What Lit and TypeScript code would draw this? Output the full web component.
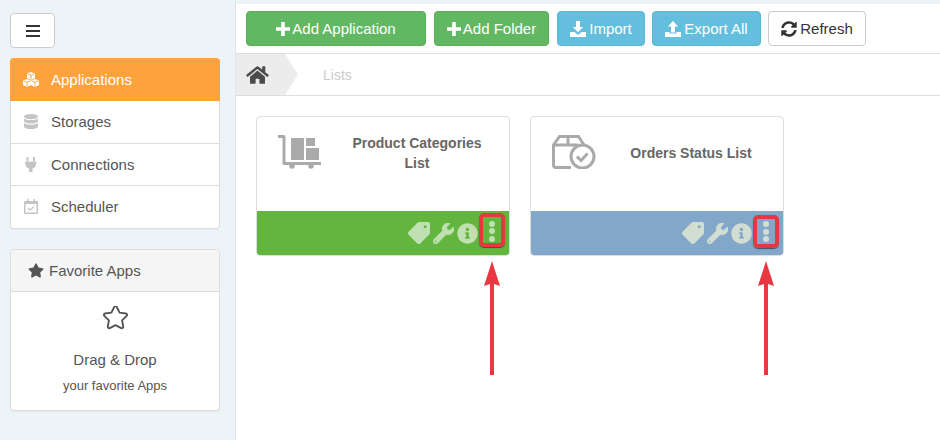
// Lists page - sidebar, toolbar, breadcrumb and list cards
import { LitElement, html, svg, css } from 'lit'
import { customElement } from 'lit/decorators.js'

const HOME = 'M280.37 148.26L96 300.11V464a16 16 0 0 0 16 16l112.06-.29a16 16 0 0 0 15.92-16V368a16 16 0 0 1 16-16h64a16 16 0 0 1 16 16v95.64a16 16 0 0 0 16 16.05L464 480a16 16 0 0 0 16-16V300L295.67 148.26a12.19 12.19 0 0 0-15.3 0zM571.6 251.47L488 182.56V44.05a12 12 0 0 0-12-12h-56a12 12 0 0 0-12 12v72.61L318.47 43a48 48 0 0 0-61 0L4.34 251.47a12 12 0 0 0-1.6 16.9l25.5 31A12 12 0 0 0 45.15 301l235.22-193.74a12.19 12.19 0 0 1 15.3 0L530.9 301a12 12 0 0 0 16.9-1.6l25.5-31a12 12 0 0 0-1.7-16.93z'
const STAR = 'M259.3 17.8L194 150.2 47.9 171.5c-26.2 3.8-36.7 36.1-17.7 54.6l105.7 103-25 145.5c-4.5 26.3 23.2 46 46.4 33.7L288 439.6l130.7 68.7c23.2 12.2 50.9-7.4 46.4-33.7l-25-145.5 105.7-103c19-18.5 8.5-50.8-17.7-54.6L382 150.2 316.7 17.8c-11.7-23.6-45.6-23.9-57.4 0z'
const SYNC = 'M370.72 133.28C339.458 104.008 298.888 87.962 255.848 88c-77.458.068-144.328 53.178-162.791 126.85-1.344 5.363-6.122 9.15-11.651 9.15H24.103c-7.498 0-13.194-6.807-11.807-14.176C33.933 94.924 134.813 8 256 8c66.448 0 126.791 26.136 171.315 68.685L463.03 40.97C478.149 25.851 504 36.559 504 57.941V192c0 13.255-10.745 24-24 24H345.941c-21.382 0-32.09-25.851-16.971-40.971l41.75-41.749zM32 296h134.059c21.382 0 32.09 25.851 16.971 40.971l-41.75 41.75c31.262 29.273 71.835 45.319 114.876 45.28 77.418-.07 144.315-53.144 162.787-126.849 1.344-5.363 6.122-9.15 11.651-9.15h57.304c7.498 0 13.194 6.807 11.807 14.176C478.067 417.076 377.187 504 256 504c-66.448 0-126.791-26.136-171.315-68.685L48.97 471.03C33.851 486.149 8 475.441 8 454.059V320c0-13.255 10.745-24 24-24z'
const TAG = 'M0 252.118V48C0 21.49 21.49 0 48 0h204.118a48 48 0 0 1 33.941 14.059l211.882 211.882c18.745 18.745 18.745 49.137 0 67.882L293.823 497.941c-18.745 18.745-49.137 18.745-67.882 0L14.059 286.059A48 48 0 0 1 0 252.118zM112 76a36 36 0 1 0 0 72a36 36 0 1 0 0-72z'
const WRENCH = 'M507.73 109.1c-2.24-9.03-13.54-12.09-20.12-5.51l-74.36 74.36-67.88-11.31-11.31-67.88 74.36-74.36c6.62-6.62 3.43-17.9-5.66-20.16-47.38-11.74-99.55.91-136.58 37.93-39.64 39.64-50.55 97.1-34.05 147.2L18.74 402.76c-24.99 24.99-24.99 65.51 0 90.5 24.99 24.99 65.51 24.99 90.5 0l213.21-213.21c50.12 16.71 107.47 5.68 147.37-34.22 37.07-37.07 49.7-89.32 37.91-136.73zM64 472c-13.25 0-24-10.75-24-24 0-13.26 10.75-24 24-24s24 10.74 24 24c0 13.25-10.75 24-24 24z'
const INFO = 'M256 8C119.043 8 8 119.083 8 256c0 136.997 111.043 248 248 248s248-111.003 248-248C504 119.083 392.957 8 256 8zm0 110c23.196 0 42 18.804 42 42s-18.804 42-42 42-42-18.804-42-42 18.804-42 42-42zm56 254c0 6.627-5.373 12-12 12h-88c-6.627 0-12-5.373-12-12v-24c0-6.627 5.373-12 12-12h12v-64h-12c-6.627 0-12-5.373-12-12v-24c0-6.627 5.373-12 12-12h64c6.627 0 12 5.373 12 12v100h12c6.627 0 12 5.373 12 12v24z'

const icon = (d: string, w: number, h: number, vb = '0 0 512 512') => html`
  <svg width=${w} height=${h} viewBox=${vb} fill="currentColor"><path d=${d}></path></svg>
`

const plus = html`<svg width="14" height="14" viewBox="0 0 14 14" fill="currentColor"><path d="M5.2 0h3.6v5.2H14v3.6H8.8V14H5.2V8.8H0V5.2h5.2z"></path></svg>`
const download = html`<svg width="16" height="16" viewBox="0 0 16 16" fill="currentColor"><path d="M6 0h4v6h3.2L8 11.2 2.8 6H6z"></path><path d="M0 11h4.4L8 14l3.6-3H16v5H0z"></path></svg>`
const upload = html`<svg width="16" height="16" viewBox="0 0 16 16" fill="currentColor"><path d="M8 0l5.2 5.4H10v6H6v-6H2.800z"></path><path d="M0 11h4.600v1.600h6.800V11H16v5H0z"></path></svg>`

// three stacked cubes, each with its seams cut out in the row colour
const cube = (x: number, y: number) => svg`
  <path transform="translate(${x} ${y})" d="M4 0l4 1.500v4.500L4 8 0 6V1.500z"></path>
  <path transform="translate(${x} ${y})" d="M.6 1.800L4 3.300l3.400-1.500M4 3.300V7.600" fill="none" stroke="#fea33c" stroke-width=".9"></path>
`
const cubes = html`<svg width="16" height="15" viewBox="0 0 16 15" fill="currentColor">
  ${cube(4, 0)}${cube(0, 7)}${cube(8, 7)}
</svg>`
const database = html`<svg width="14" height="15" viewBox="0 0 14 15" fill="currentColor">
  <ellipse cx="7" cy="2.600" rx="7" ry="2.600"></ellipse>
  <path d="M0 4.400c1.400 1.200 4 1.700 7 1.700s5.600-.5 7-1.700v2.600c0 1.400-3.100 2.500-7 2.500S0 8.400 0 7z"></path>
  <path d="M0 9c1.400 1.200 4 1.700 7 1.700s5.600-.5 7-1.700v3.400C14 13.900 10.900 15 7 15s-7-1.100-7-2.600z"></path>
</svg>`
const plug = html`<svg width="12" height="15" viewBox="0 0 12 15" fill="currentColor">
  <path d="M1.500 0h2v4h-2zM8 0h2v4H8z"></path>
  <path d="M0 4.500h11.500v2h-.7v1.200c0 2-1.400 3.500-3.300 3.800V15H4v-3.500C2.100 11.200.7 9.700.7 7.700V6.500H0z"></path>
</svg>`
const calendar = html`<svg width="14" height="15" viewBox="0 0 14 15">
  <path d="M1 2h12a1 1 0 0 1 1 1v11a1 1 0 0 1-1 1H1a1 1 0 0 1-1-1V3a1 1 0 0 1 1-1z" fill="currentColor"></path>
  <path d="M3 0h1.500v3H3zM9.500 0H11v3H9.500z" fill="currentColor"></path>
  <rect x="1.500" y="5" width="11" height="8.500" fill="#fff"></rect>
  <path d="M4 9l2.200 2.200L10 7.400" fill="none" stroke="currentColor" stroke-width="1.300"></path>
</svg>`

const trolley = html`<svg width="44" height="36" viewBox="0 0 44 36">
  <path d="M0 3.500h6v27h37" fill="none" stroke="currentColor" stroke-width="3" stroke-linejoin="round"></path>
  <rect x="13" y="5" width="13" height="22" fill="currentColor"></rect>
  <rect x="28" y="5" width="9" height="8" fill="currentColor"></rect>
  <rect x="28" y="15" width="13" height="12" fill="currentColor"></rect>
  <circle cx="14" cy="33" r="2.800" fill="currentColor"></circle>
  <circle cx="33" cy="33" r="2.800" fill="currentColor"></circle>
</svg>`
const parcel = html`<svg width="44" height="36" viewBox="0 0 44 36" fill="none" stroke="currentColor" stroke-width="3">
  <path d="M19 34.500H4a2.500 2.500 0 0 1-2.500-2.500V12L7.500 3.500h19L32 12"></path>
  <path d="M1.500 12H26M16 3.500V12"></path>
  <circle cx="30.500" cy="23.500" r="11.500"></circle>
  <path d="M25 23.500l4 4 6.500-7"></path>
</svg>`

const arrow = svg`
  <path d="M8 0l8 25-6-2v91H6V23l-6 2z" fill="#ea3741"></path>
`

@customElement('app-root')
export class AppRoot extends LitElement {
  static styles = css`
    :host {
      display: flex;
      width: 940px;
      height: 440px;
      overflow: hidden;
      position: relative;
      background: #edf4f7;
      font-family: 'Liberation Sans', Arial, sans-serif;
      color: #555;
    }

    .side {
      width: 236px;
      flex: none;
      box-sizing: border-box;
      padding: 13px 15px 0 10px;
      border-right: 1px solid #e0e4e6;
    }

    .toggle {
      display: flex;
      align-items: center;
      justify-content: center;
      width: 45px;
      height: 35px;
      box-sizing: border-box;
      background: #fff;
      border: 1px solid #ccc;
      border-radius: 4px;
      margin-bottom: 10px;
    }
    .toggle svg { display: block; }

    .menu {
      background: #fff;
      border: 1px solid #ddd;
      border-radius: 4px;
      box-shadow: 0 1px 1px rgba(0, 0, 0, 0.05);
      margin-bottom: 20px;
    }
    .menu-item {
      display: flex;
      align-items: center;
      height: 42px;
      box-sizing: border-box;
      padding-left: 12px;
      border-top: 1px solid #ddd;
      font-size: 15px;
      color: #555;
    }
    .menu-item:first-child { border-top: 0; }
    .menu-item.active {
      margin: -1px -1px 0;
      height: 43px;
      padding-left: 13px;
      background: #fea33c;
      color: #fff;
      border-radius: 4px 4px 0 0;
    }
    .menu-item.active + .menu-item { border-top: 0; padding-bottom: 1px; }
    .menu-icon {
      width: 16px;
      margin-right: 12px;
      display: flex;
      justify-content: center;
      color: #c4c4c4;
    }
    .active .menu-icon { color: #fff; }
    .menu-item:last-child { height: 43px; padding-bottom: 2px; }

    .fav {
      background: #fff;
      border: 1px solid #ddd;
      border-radius: 4px;
      box-shadow: 0 1px 1px rgba(0, 0, 0, 0.05);
      height: 162px;
      box-sizing: border-box;
    }
    .fav-head {
      display: flex;
      align-items: center;
      gap: 5px;
      height: 42px;
      box-sizing: border-box;
      padding-left: 17px;
      background: #f5f5f5;
      border-bottom: 1px solid #ddd;
      border-radius: 4px 4px 0 0;
      font-size: 15px;
      color: #555;
    }
    .fav-body {
      display: flex;
      flex-direction: column;
      align-items: center;
      padding-top: 14px;
    }
    .fav-title { font-size: 15px; line-height: 20px; margin-top: 20px; }
    .fav-sub { font-size: 13px; line-height: 16px; margin-top: 8px; color: #555; }

    .main {
      flex: 1;
      margin-top: 4px;
      background: #fff;
      min-width: 0;
    }

    .toolbar {
      display: flex;
      gap: 8px;
      height: 50px;
      box-sizing: border-box;
      padding: 7px 10px 0;
      border-bottom: 1px solid #ddd;
    }
    .btn {
      display: flex;
      align-items: center;
      justify-content: center;
      gap: 3px;
      height: 35px;
      box-sizing: border-box;
      border: 1px solid transparent;
      border-radius: 4px;
      font-size: 15px;
      color: #fff;
    }
    .btn svg { display: block; }
    .green { background: #62b762; border-color: #58ad58; gap: 2px; }
    .blue { background: #64bfde; border-color: #5ab6d6; }
    .plain { background: #fff; border-color: #ccc; color: #333; }
    .w-app { width: 180px; }
    .w-folder { width: 115px; }
    .w-import { width: 88px; }
    .w-export { width: 109px; margin-left: -1px; }
    .w-refresh { width: 98px; margin-left: -1px; }

    .crumbs {
      display: flex;
      align-items: stretch;
      height: 42px;
      box-sizing: border-box;
      border-bottom: 1px solid #ddd;
    }
    .home {
      display: flex;
      align-items: center;
      width: 62px;
      padding-left: 10px;
      box-sizing: border-box;
      background: #ececec;
      color: #4c4c4c;
      clip-path: polygon(0 0, 49px 0, 62px 50%, 49px 100%, 0 100%);
    }
    .crumb {
      display: flex;
      align-items: center;
      margin-left: 25px;
      font-size: 14px;
      color: #ccc;
    }

    .cards {
      display: flex;
      gap: 20px;
      padding: 20px;
    }
    .card {
      width: 254px;
      height: 140px;
      box-sizing: border-box;
      display: flex;
      flex-direction: column;
      border: 1px solid #ddd;
      border-radius: 4px;
      overflow: hidden;
    }
    .card-body {
      display: flex;
      height: 94px;
      box-sizing: border-box;
      padding: 16px 15px 0 21px;
    }
    .card-icon {
      flex: none;
      width: 44px;
      height: 36px;
      color: #aaa;
    }
    .card-icon svg { display: block; }
    .card-title {
      flex: 1;
      display: flex;
      align-items: center;
      justify-content: center;
      height: 40px;
      margin-left: 18px;
      text-align: center;
      font-size: 14px;
      font-weight: bold;
      line-height: 20px;
      color: #666;
    }
    .card-foot {
      flex: 1;
      display: flex;
      align-items: center;
      justify-content: flex-end;
      gap: 3px;
      padding-right: 4px;
    }
    .card-foot svg { display: block; }
    .card-foot .wrench path { stroke: currentColor; stroke-width: 14; }
    .f-green { background: #62b63e; color: #bfe0b0; }
    .f-blue { background: #83a7c9; color: #d3ded3; }

    .more {
      position: relative;
      display: flex;
      flex-direction: column;
      align-items: center;
      justify-content: center;
      gap: 1.500px;
      width: 26px;
      height: 34px;
      box-sizing: border-box;
      margin: -6px 0 0 -2px;
      padding-top: 2px;
      border: 4px solid #e5383f;
      border-radius: 5px;
      box-shadow: 0 1px 1px rgba(0, 0, 0, 0.5);
    }
    .more i {
      display: block;
      flex: none;
      width: 6px;
      height: 6px;
      border-radius: 50%;
      background: currentColor;
    }
    .f-blue .more { margin-top: -3px; padding-top: 0; height: 33px; }

    .arrow {
      position: absolute;
      top: 261px;
      display: block;
    }
  `

  private card(title: unknown, ico: unknown, foot: string) {
    return html`
      <div class="card">
        <div class="card-body">
          <div class="card-icon">${ico}</div>
          <div class="card-title"><span>${title}</span></div>
        </div>
        <div class="card-foot ${foot}">
          <svg width="22" height="22" viewBox="0 0 512 512" fill="currentColor">
            <path transform="rotate(90 256 256)" d=${TAG}></path>
          </svg>
          <span class="wrench">${icon(WRENCH, 21, 21)}</span>
          ${icon(INFO, 21, 21)}
          <div class="more"><i></i><i></i><i></i></div>
        </div>
      </div>
    `
  }

  render() {
    return html`
      <div class="side">
        <div class="toggle">
          <svg width="14" height="12" viewBox="0 0 14 12" fill="#333">
            <path d="M0 0h14v2H0zM0 5h14v2H0zM0 10h14v2H0z"></path>
          </svg>
        </div>
        <div class="menu">
          <div class="menu-item active"><span class="menu-icon">${cubes}</span>Applications</div>
          <div class="menu-item"><span class="menu-icon">${database}</span>Storages</div>
          <div class="menu-item"><span class="menu-icon">${plug}</span>Connections</div>
          <div class="menu-item"><span class="menu-icon">${calendar}</span>Scheduler</div>
        </div>
        <div class="fav">
          <div class="fav-head">${icon(STAR, 16, 15, '0 0 576 512')}<span>Favorite Apps</span></div>
          <div class="fav-body">
            <svg width="25" height="24" viewBox="0 0 576 550" fill="none" stroke="#555" stroke-width="44" stroke-linejoin="round">
              <path d=${STAR}></path>
            </svg>
            <div class="fav-title">Drag &amp; Drop</div>
            <div class="fav-sub">your favorite Apps</div>
          </div>
        </div>
      </div>
      <div class="main">
        <div class="toolbar">
          <div class="btn green w-app">${plus}Add Application</div>
          <div class="btn green w-folder">${plus}Add Folder</div>
          <div class="btn blue w-import">${download}Import</div>
          <div class="btn blue w-export">${upload}Export All</div>
          <div class="btn plain w-refresh">${icon(SYNC, 16, 16)}Refresh</div>
        </div>
        <div class="crumbs">
          <div class="home">${icon(HOME, 23, 20, '0 0 576 512')}</div>
          <div class="crumb">Lists</div>
        </div>
        <div class="cards">
          ${this.card(html`Product Categories<br />List`, trolley, 'f-green')}
          ${this.card('Orders Status List', parcel, 'f-blue')}
        </div>
      </div>
      <svg class="arrow" style="left: 484px" width="16" height="115" viewBox="0 0 16 115">${arrow}</svg>
      <svg class="arrow" style="left: 758px" width="16" height="115" viewBox="0 0 16 115">${arrow}</svg>
    `
  }
}
